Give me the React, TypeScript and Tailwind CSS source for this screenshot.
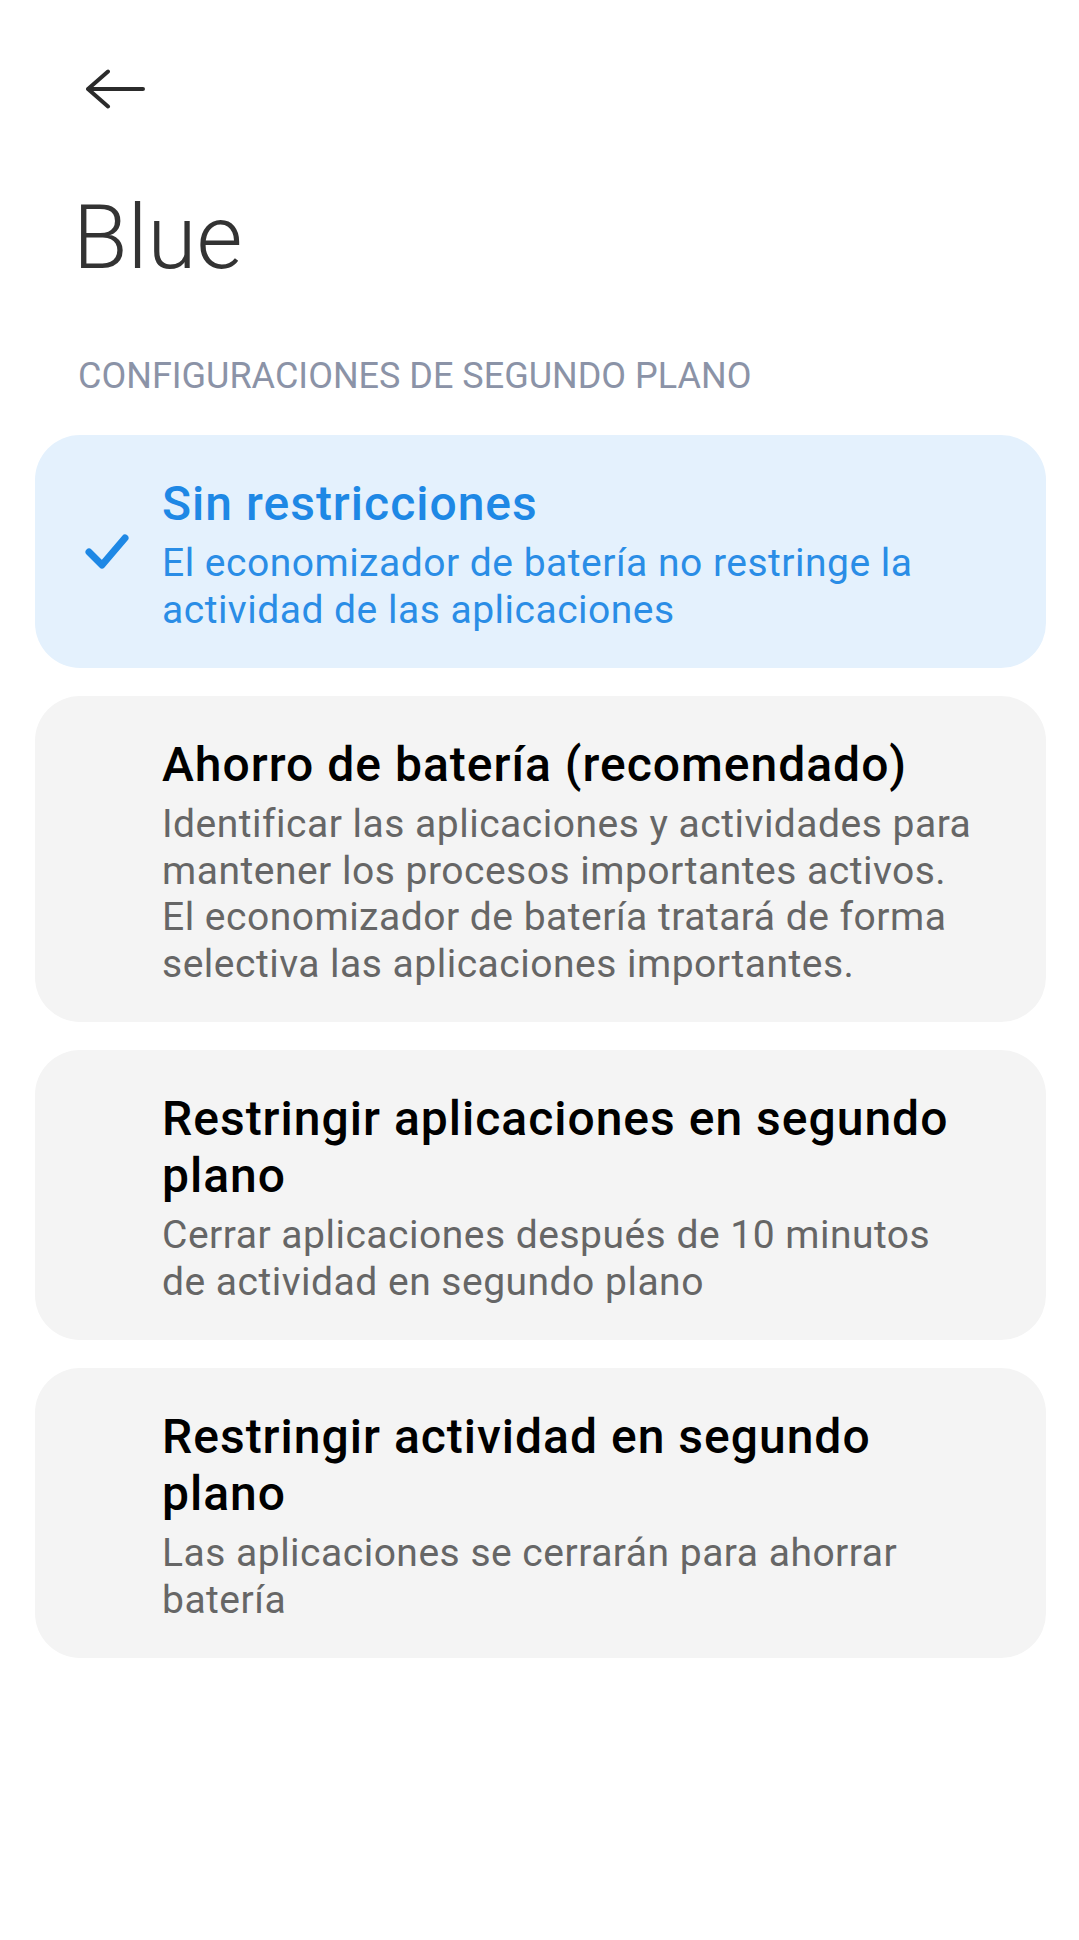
import React from "react";

const options = [
  {
    title: "Sin restricciones",
    copy: "El economizador de batería no restringe la actividad de las aplicaciones",
    selected: true,
  },
  {
    title: "Ahorro de batería (recomendado)",
    copy: "Identificar las aplicaciones y actividades para mantener los procesos importantes activos. El economizador de batería tratará de forma selectiva las aplicaciones importantes.",
    selected: false,
  },
  {
    title: "Restringir aplicaciones en segundo plano",
    copy: "Cerrar aplicaciones después de 10 minutos de actividad en segundo plano",
    selected: false,
  },
  {
    title: "Restringir actividad en segundo plano",
    copy: "Las aplicaciones se cerrarán para ahorrar batería",
    selected: false,
  },
];

const BackArrow = () => (
  <svg width="60" height="40" viewBox="0 0 60 40" fill="none">
    <path
      d="M22 2.5 L2 20 L22 37.5 M2 20 H57"
      stroke="#2b2b2b"
      strokeWidth="4"
      strokeLinecap="round"
      strokeLinejoin="round"
    />
  </svg>
);

const Check = () => (
  <svg width="44" height="36" viewBox="0 0 44 36" fill="none">
    <path
      d="M4 18 L17 31 L40 4"
      stroke="#1e88e5"
      strokeWidth="7"
      strokeLinecap="round"
      strokeLinejoin="round"
    />
  </svg>
);

export default function App() {
  return (
    <div className="min-h-[1940px] w-full bg-white font-['Roboto',sans-serif]">
      <div className="pl-[86px] pt-[69px]">
        <BackArrow />
      </div>

      <h1 className="mt-[84px] pl-[73px] text-[89px] font-light leading-[90px] text-[#333333]">
        Blue
      </h1>

      <div className="mt-[75px] pl-[78px] text-[36px] leading-[36px] text-[#8b93a7]">
        CONFIGURACIONES DE SEGUNDO PLANO
      </div>

      <div className="ml-[35px] mr-[33px] mt-[41px] flex flex-col gap-[28px]">
        {options.map((item) => (
          <div
            key={item.title}
            className={
              item.selected
                ? "relative flex rounded-[45px] bg-[#e4f1fd] pb-[35px] pl-[127px] pr-[70px] pt-[40px]"
                : "relative flex rounded-[45px] bg-[#f4f4f4] pb-[35px] pl-[127px] pr-[70px] pt-[40px]"
            }
          >
            {item.selected && (
              <div className="absolute left-[50px] top-0 flex h-full items-center">
                <Check />
              </div>
            )}
            <div>
              <div
                className={
                  item.selected
                    ? "text-[48px] font-medium leading-[57px] tracking-[1px] text-[#1e88e5]"
                    : "text-[48px] font-medium leading-[57px] tracking-[1px] text-black"
                }
              >
                {item.title}
              </div>
              <p
                className={
                  item.selected
                    ? "mt-[8px] text-[39px] leading-[46.5px] tracking-[0.5px] text-[#2a8de6]"
                    : "mt-[8px] text-[39px] leading-[46.5px] tracking-[0.5px] text-[#666666]"
                }
              >
                {item.copy}
              </p>
            </div>
          </div>
        ))}
      </div>
    </div>
  );
}
